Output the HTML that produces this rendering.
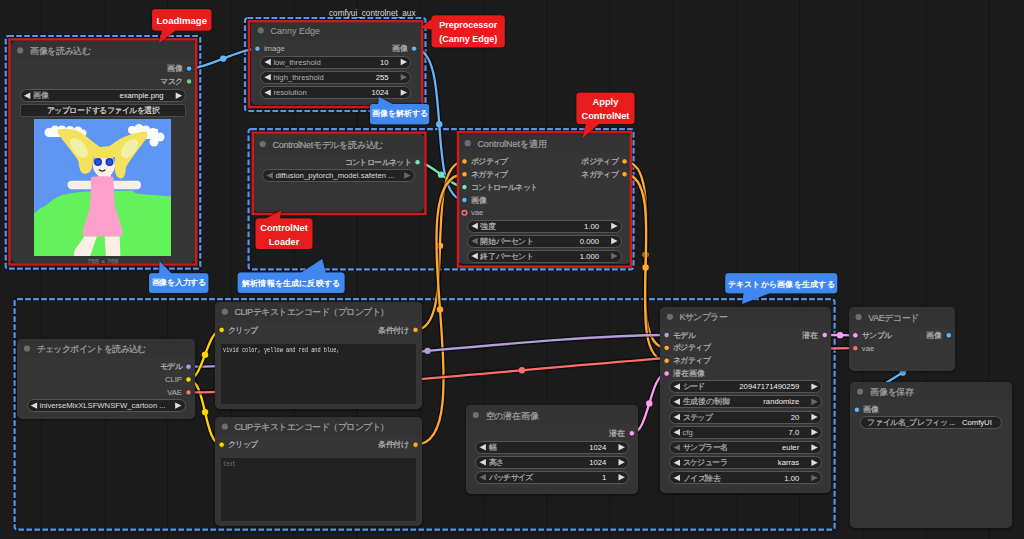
<!DOCTYPE html><html><head><meta charset="utf-8"><style>

*{margin:0;padding:0;box-sizing:border-box}
html,body{width:1024px;height:539px;overflow:hidden;background:#1b1b1b}
body{position:relative;font-family:"Liberation Sans", sans-serif}
.abs{position:absolute}
.t{position:absolute;white-space:nowrap;line-height:20px;height:20px}
.node{position:absolute;background:#353535;border-radius:5px;overflow:hidden;box-shadow:0 1px 3px rgba(0,0,0,0.5)}
.node::before{content:"";position:absolute;left:0;top:0;right:0;height:19.5px;background:#333333}
.wgt{position:absolute;background:#222;border:1px solid #555;border-radius:6.5px}
.btn{position:absolute;background:#222;border:1px solid #4a4a4a;border-radius:2px}
.ta{position:absolute;background:#222}

</style></head><body>
<svg class="abs" style="left:0;top:0" width="1024" height="539"><line x1="-22.0" y1="0" x2="-22.0" y2="539" stroke="#161616" stroke-width="1.2"/><line x1="41.2" y1="0" x2="41.2" y2="539" stroke="#161616" stroke-width="1.2"/><line x1="104.5" y1="0" x2="104.5" y2="539" stroke="#161616" stroke-width="1.2"/><line x1="167.7" y1="0" x2="167.7" y2="539" stroke="#161616" stroke-width="1.2"/><line x1="230.9" y1="0" x2="230.9" y2="539" stroke="#161616" stroke-width="1.2"/><line x1="294.1" y1="0" x2="294.1" y2="539" stroke="#161616" stroke-width="1.2"/><line x1="357.2" y1="0" x2="357.2" y2="539" stroke="#161616" stroke-width="1.2"/><line x1="420.5" y1="0" x2="420.5" y2="539" stroke="#161616" stroke-width="1.2"/><line x1="483.7" y1="0" x2="483.7" y2="539" stroke="#161616" stroke-width="1.2"/><line x1="546.9" y1="0" x2="546.9" y2="539" stroke="#161616" stroke-width="1.2"/><line x1="610.1" y1="0" x2="610.1" y2="539" stroke="#161616" stroke-width="1.2"/><line x1="673.2" y1="0" x2="673.2" y2="539" stroke="#161616" stroke-width="1.2"/><line x1="736.5" y1="0" x2="736.5" y2="539" stroke="#161616" stroke-width="1.2"/><line x1="799.7" y1="0" x2="799.7" y2="539" stroke="#161616" stroke-width="1.2"/><line x1="862.9" y1="0" x2="862.9" y2="539" stroke="#161616" stroke-width="1.2"/><line x1="926.1" y1="0" x2="926.1" y2="539" stroke="#161616" stroke-width="1.2"/><line x1="989.2" y1="0" x2="989.2" y2="539" stroke="#161616" stroke-width="1.2"/><line x1="1052.5" y1="0" x2="1052.5" y2="539" stroke="#161616" stroke-width="1.2"/><rect x="5.70" y="36.00" width="194.60" height="232.70" fill="none" rx="2.5" stroke="rgba(8,16,36,0.8)" stroke-width="3.2"/><rect x="5.70" y="36.00" width="194.60" height="232.70" fill="none" rx="2.5" stroke="#5d93e0" stroke-width="2.2" stroke-dasharray="5.8 2.2"/><rect x="245.00" y="18.00" width="180.50" height="93.00" fill="none" rx="2.5" stroke="rgba(8,16,36,0.8)" stroke-width="3.2"/><rect x="245.00" y="18.00" width="180.50" height="93.00" fill="none" rx="2.5" stroke="#5d93e0" stroke-width="2.2" stroke-dasharray="5.8 2.2"/><rect x="248.60" y="129.10" width="384.90" height="140.20" fill="none" rx="2.5" stroke="rgba(8,16,36,0.8)" stroke-width="3.2"/><rect x="248.60" y="129.10" width="384.90" height="140.20" fill="none" rx="2.5" stroke="#5d93e0" stroke-width="2.2" stroke-dasharray="5.8 2.2"/><rect x="14.60" y="299.20" width="820.00" height="230.40" fill="none" rx="2.5" stroke="rgba(8,16,36,0.8)" stroke-width="3.2"/><rect x="14.60" y="299.20" width="820.00" height="230.40" fill="none" rx="2.5" stroke="#5d93e0" stroke-width="2.2" stroke-dasharray="5.8 2.2"/><path d="M189.05 68.60 C206.87 68.60 239.63 48.60 257.45 48.60" stroke="rgba(0,0,0,0.55)" stroke-width="5" fill="none"/><path d="M189.05 68.60 C206.87 68.60 239.63 48.60 257.45 48.60" stroke="#64B5F6" stroke-width="2.3" fill="none"/><circle cx="223.25" cy="58.60" r="3.2" fill="#64B5F6"/><path d="M414.05 48.60 C453.93 48.60 424.57 199.95 464.45 199.95" stroke="rgba(0,0,0,0.55)" stroke-width="5" fill="none"/><path d="M414.05 48.60 C453.93 48.60 424.57 199.95 464.45 199.95" stroke="#64B5F6" stroke-width="2.3" fill="none"/><circle cx="439.25" cy="124.27" r="3.2" fill="#64B5F6"/><path d="M417.55 162.20 C430.83 162.20 451.17 187.10 464.45 187.10" stroke="rgba(0,0,0,0.55)" stroke-width="5" fill="none"/><path d="M417.55 162.20 C430.83 162.20 451.17 187.10 464.45 187.10" stroke="#6EE7B7" stroke-width="2.3" fill="none"/><circle cx="441.00" cy="174.65" r="3.2" fill="#6EE7B7"/><path d="M415.55 329.90 C459.41 329.90 420.59 161.40 464.45 161.40" stroke="rgba(0,0,0,0.55)" stroke-width="5" fill="none"/><path d="M415.55 329.90 C459.41 329.90 420.59 161.40 464.45 161.40" stroke="#FFA931" stroke-width="2.3" fill="none"/><circle cx="440.00" cy="245.65" r="3.2" fill="#FFA931"/><path d="M415.55 444.70 C484.26 444.70 395.74 174.25 464.45 174.25" stroke="rgba(0,0,0,0.55)" stroke-width="5" fill="none"/><path d="M415.55 444.70 C484.26 444.70 395.74 174.25 464.45 174.25" stroke="#FFA931" stroke-width="2.3" fill="none"/><circle cx="440.00" cy="309.48" r="3.2" fill="#FFA931"/><path d="M624.55 161.40 C672.34 161.40 618.86 347.85 666.65 347.85" stroke="rgba(0,0,0,0.55)" stroke-width="5" fill="none"/><path d="M624.55 161.40 C672.34 161.40 618.86 347.85 666.65 347.85" stroke="#FFA931" stroke-width="2.3" fill="none"/><circle cx="645.60" cy="254.62" r="3.2" fill="#FFA931"/><path d="M624.55 174.25 C672.34 174.25 618.86 360.70 666.65 360.70" stroke="rgba(0,0,0,0.55)" stroke-width="5" fill="none"/><path d="M624.55 174.25 C672.34 174.25 618.86 360.70 666.65 360.70" stroke="#FFA931" stroke-width="2.3" fill="none"/><circle cx="645.60" cy="267.48" r="3.2" fill="#FFA931"/><path d="M188.45 366.70 C308.26 366.70 546.84 335.00 666.65 335.00" stroke="rgba(0,0,0,0.55)" stroke-width="5" fill="none"/><path d="M188.45 366.70 C308.26 366.70 546.84 335.00 666.65 335.00" stroke="#B39DDB" stroke-width="2.3" fill="none"/><circle cx="427.55" cy="350.85" r="3.2" fill="#B39DDB"/><path d="M188.45 379.55 C203.38 379.55 206.72 329.90 221.65 329.90" stroke="rgba(0,0,0,0.55)" stroke-width="5" fill="none"/><path d="M188.45 379.55 C203.38 379.55 206.72 329.90 221.65 329.90" stroke="#FFD500" stroke-width="2.3" fill="none"/><circle cx="205.05" cy="354.73" r="3.2" fill="#FFD500"/><path d="M188.45 379.55 C206.73 379.55 203.37 444.70 221.65 444.70" stroke="rgba(0,0,0,0.55)" stroke-width="5" fill="none"/><path d="M188.45 379.55 C206.73 379.55 203.37 444.70 221.65 444.70" stroke="#FFD500" stroke-width="2.3" fill="none"/><circle cx="205.05" cy="412.12" r="3.2" fill="#FFD500"/><path d="M188.45 392.40 C355.54 392.40 688.26 348.15 855.35 348.15" stroke="rgba(0,0,0,0.55)" stroke-width="5" fill="none"/><path d="M188.45 392.40 C355.54 392.40 688.26 348.15 855.35 348.15" stroke="#FF6E6E" stroke-width="2.3" fill="none"/><circle cx="521.90" cy="370.27" r="3.2" fill="#FF6E6E"/><path d="M631.85 433.30 C649.14 433.30 649.36 373.55 666.65 373.55" stroke="rgba(0,0,0,0.55)" stroke-width="5" fill="none"/><path d="M631.85 433.30 C649.14 433.30 649.36 373.55 666.65 373.55" stroke="#FF9CF9" stroke-width="2.3" fill="none"/><circle cx="649.25" cy="403.42" r="3.2" fill="#FF9CF9"/><path d="M824.75 335.00 C832.40 335.00 847.70 335.30 855.35 335.30" stroke="rgba(0,0,0,0.55)" stroke-width="5" fill="none"/><path d="M824.75 335.00 C832.40 335.00 847.70 335.30 855.35 335.30" stroke="#FF9CF9" stroke-width="2.3" fill="none"/><circle cx="840.05" cy="335.15" r="3.2" fill="#FF9CF9"/><path d="M948.75 335.30 C978.33 335.30 827.27 409.80 856.85 409.80" stroke="rgba(0,0,0,0.55)" stroke-width="5" fill="none"/><path d="M948.75 335.30 C978.33 335.30 827.27 409.80 856.85 409.80" stroke="#64B5F6" stroke-width="2.3" fill="none"/><circle cx="902.80" cy="372.55" r="3.2" fill="#64B5F6"/></svg>
<div class="node" style="left:10.50px;top:40.70px;width:185.00px;height:222.80px"></div>
<div class="t" style="left:29.90px;top:41.00px;font-size:9px;color:#a0a0a0;-webkit-text-stroke:0.2px #a0a0a0;letter-spacing:-0.034em;">画像を読み込む</div>
<div class="t" style="right:841.40px;top:59.20px;font-size:7.7px;color:#b8b8b8;-webkit-text-stroke:0.2px #b8b8b8;">画像</div>
<div class="t" style="right:841.40px;top:72.05px;font-size:7.7px;color:#b8b8b8;-webkit-text-stroke:0.2px #b8b8b8;letter-spacing:-0.080em;">マスク</div>
<div class="wgt" style="left:19.70px;top:89.20px;width:166.40px;height:13px"></div>
<div class="t" style="left:32.90px;top:86.30px;font-size:7.7px;color:#b0b0b0;-webkit-text-stroke:0.2px #b0b0b0;">画像</div>
<div class="t" style="right:860.50px;top:86.30px;font-size:7.7px;color:#eeeeee;">example.png</div>
<div class="btn" style="left:20.10px;top:103.90px;width:165.80px;height:12.8px"></div>
<div class="t" style="left:-47.00px;width:300px;text-align:center;top:100.90px;font-size:7.7px;color:#ddd;-webkit-text-stroke:0.2px #ddd;letter-spacing:-0.069em;">アップロードするファイルを選択</div>
<div class="t" style="left:-47.00px;width:300px;text-align:center;top:251.90px;font-size:7px;color:#888;">768 × 768</div>
<div class="node" style="left:251.00px;top:20.70px;width:169.50px;height:84.80px"></div>
<div class="t" style="left:270.40px;top:21.00px;font-size:9px;color:#a0a0a0;">Canny Edge</div>
<div class="t" style="left:263.90px;top:39.20px;font-size:7.7px;color:#b8b8b8;">image</div>
<div class="t" style="right:616.40px;top:39.20px;font-size:7.7px;color:#b8b8b8;-webkit-text-stroke:0.2px #b8b8b8;">画像</div>
<div class="wgt" style="left:260.20px;top:55.50px;width:150.90px;height:13px"></div>
<div class="t" style="left:273.40px;top:52.60px;font-size:7.7px;color:#b0b0b0;">low_threshold</div>
<div class="t" style="right:635.50px;top:52.60px;font-size:7.7px;color:#eeeeee;">10</div>
<div class="wgt" style="left:260.20px;top:70.80px;width:150.90px;height:13px"></div>
<div class="t" style="left:273.40px;top:67.90px;font-size:7.7px;color:#b0b0b0;">high_threshold</div>
<div class="t" style="right:635.50px;top:67.90px;font-size:7.7px;color:#eeeeee;">255</div>
<div class="wgt" style="left:260.20px;top:86.10px;width:150.90px;height:13px"></div>
<div class="t" style="left:273.40px;top:83.20px;font-size:7.7px;color:#b0b0b0;">resolution</div>
<div class="t" style="right:635.50px;top:83.20px;font-size:7.7px;color:#eeeeee;">1024</div>
<div class="node" style="left:253.00px;top:134.30px;width:171.00px;height:78.00px"></div>
<div class="t" style="left:272.40px;top:134.60px;font-size:9px;color:#a0a0a0;-webkit-text-stroke:0.2px #a0a0a0;letter-spacing:-0.027em;">ControlNetモデルを読み込む</div>
<div class="t" style="right:612.90px;top:152.80px;font-size:7.7px;color:#b8b8b8;-webkit-text-stroke:0.2px #b8b8b8;letter-spacing:-0.080em;">コントロールネット</div>
<div class="wgt" style="left:262.20px;top:169.00px;width:152.40px;height:13px"></div>
<div class="t" style="left:275.40px;top:166.10px;font-size:7.7px;color:#ddd;">diffusion_pytorch_model.safeten ...</div>
<div class="node" style="left:458.00px;top:133.50px;width:173.00px;height:130.50px"></div>
<div class="t" style="left:477.40px;top:133.80px;font-size:9px;color:#a0a0a0;-webkit-text-stroke:0.2px #a0a0a0;letter-spacing:-0.006em;">ControlNetを適用</div>
<div class="t" style="left:470.90px;top:152.00px;font-size:7.7px;color:#b8b8b8;-webkit-text-stroke:0.2px #b8b8b8;letter-spacing:-0.080em;">ポジティブ</div>
<div class="t" style="left:470.90px;top:164.85px;font-size:7.7px;color:#b8b8b8;-webkit-text-stroke:0.2px #b8b8b8;letter-spacing:-0.080em;">ネガティブ</div>
<div class="t" style="left:470.90px;top:177.70px;font-size:7.7px;color:#b8b8b8;-webkit-text-stroke:0.2px #b8b8b8;letter-spacing:-0.080em;">コントロールネット</div>
<div class="t" style="left:470.90px;top:190.55px;font-size:7.7px;color:#b8b8b8;-webkit-text-stroke:0.2px #b8b8b8;">画像</div>
<div class="t" style="left:470.90px;top:203.40px;font-size:7.7px;color:#b8b8b8;">vae</div>
<div class="t" style="right:405.90px;top:152.00px;font-size:7.7px;color:#b8b8b8;-webkit-text-stroke:0.2px #b8b8b8;letter-spacing:-0.080em;">ポジティブ</div>
<div class="t" style="right:405.90px;top:164.85px;font-size:7.7px;color:#b8b8b8;-webkit-text-stroke:0.2px #b8b8b8;letter-spacing:-0.080em;">ネガティブ</div>
<div class="wgt" style="left:467.20px;top:219.50px;width:154.40px;height:13px"></div>
<div class="t" style="left:480.40px;top:216.60px;font-size:7.7px;color:#b0b0b0;-webkit-text-stroke:0.2px #b0b0b0;">強度</div>
<div class="t" style="right:425.00px;top:216.60px;font-size:7.7px;color:#eeeeee;">1.00</div>
<div class="wgt" style="left:467.20px;top:234.50px;width:154.40px;height:13px"></div>
<div class="t" style="left:480.40px;top:231.60px;font-size:7.7px;color:#b0b0b0;-webkit-text-stroke:0.2px #b0b0b0;letter-spacing:-0.057em;">開始パーセント</div>
<div class="t" style="right:425.00px;top:231.60px;font-size:7.7px;color:#eeeeee;">0.000</div>
<div class="wgt" style="left:467.20px;top:249.50px;width:154.40px;height:13px"></div>
<div class="t" style="left:480.40px;top:246.60px;font-size:7.7px;color:#b0b0b0;-webkit-text-stroke:0.2px #b0b0b0;letter-spacing:-0.057em;">終了パーセント</div>
<div class="t" style="right:425.00px;top:246.60px;font-size:7.7px;color:#eeeeee;">1.000</div>
<div class="node" style="left:215.20px;top:302.00px;width:206.80px;height:107.40px"></div>
<div class="t" style="left:234.60px;top:302.30px;font-size:9px;color:#a0a0a0;-webkit-text-stroke:0.2px #a0a0a0;letter-spacing:-0.056em;">CLIPテキストエンコード（プロンプト）</div>
<div class="t" style="left:228.10px;top:320.50px;font-size:7.7px;color:#b8b8b8;-webkit-text-stroke:0.2px #b8b8b8;letter-spacing:-0.080em;">クリップ</div>
<div class="t" style="right:614.90px;top:320.50px;font-size:7.7px;color:#b8b8b8;-webkit-text-stroke:0.2px #b8b8b8;letter-spacing:-0.020em;">条件付け</div>
<div class="ta" style="left:221px;top:344px;width:194.5px;height:60px"></div>
<div class="t" style="left:222.50px;top:339.60px;font-size:7px;color:#ddd;font-family:'Liberation Mono', monospace;transform:scaleX(0.75);transform-origin:0 50%;">vivid color, yellow and red and blue,</div>
<div class="node" style="left:215.20px;top:416.80px;width:206.80px;height:109.60px"></div>
<div class="t" style="left:234.60px;top:417.10px;font-size:9px;color:#a0a0a0;-webkit-text-stroke:0.2px #a0a0a0;letter-spacing:-0.056em;">CLIPテキストエンコード（プロンプト）</div>
<div class="t" style="left:228.10px;top:435.30px;font-size:7.7px;color:#b8b8b8;-webkit-text-stroke:0.2px #b8b8b8;letter-spacing:-0.080em;">クリップ</div>
<div class="t" style="right:614.90px;top:435.30px;font-size:7.7px;color:#b8b8b8;-webkit-text-stroke:0.2px #b8b8b8;letter-spacing:-0.020em;">条件付け</div>
<div class="ta" style="left:221px;top:458px;width:194.5px;height:63px"></div>
<div class="t" style="left:222.50px;top:453.60px;font-size:7px;color:#777;font-family:'Liberation Mono', monospace;transform:scaleX(0.75);transform-origin:0 50%;">text</div>
<div class="node" style="left:17.30px;top:338.80px;width:177.60px;height:80.70px"></div>
<div class="t" style="left:36.70px;top:339.10px;font-size:9px;color:#a0a0a0;-webkit-text-stroke:0.2px #a0a0a0;letter-spacing:-0.068em;">チェックポイントを読み込む</div>
<div class="t" style="right:842.00px;top:357.30px;font-size:7.7px;color:#b8b8b8;-webkit-text-stroke:0.2px #b8b8b8;letter-spacing:-0.080em;">モデル</div>
<div class="t" style="right:842.00px;top:370.15px;font-size:7.7px;color:#b8b8b8;">CLIP</div>
<div class="t" style="right:842.00px;top:383.00px;font-size:7.7px;color:#b8b8b8;">VAE</div>
<div class="wgt" style="left:26.50px;top:399.10px;width:159.00px;height:13px"></div>
<div class="t" style="left:39.70px;top:396.20px;font-size:7.7px;color:#ddd;">iniverseMixXLSFWNSFW_cartoon ...</div>
<div class="node" style="left:466.10px;top:405.40px;width:172.20px;height:88.20px"></div>
<div class="t" style="left:485.50px;top:405.70px;font-size:9px;color:#a0a0a0;-webkit-text-stroke:0.2px #a0a0a0;letter-spacing:-0.013em;">空の潜在画像</div>
<div class="t" style="right:398.60px;top:423.90px;font-size:7.7px;color:#b8b8b8;-webkit-text-stroke:0.2px #b8b8b8;">潜在</div>
<div class="wgt" style="left:475.30px;top:440.70px;width:153.60px;height:13px"></div>
<div class="t" style="left:488.50px;top:437.80px;font-size:7.7px;color:#b0b0b0;-webkit-text-stroke:0.2px #b0b0b0;">幅</div>
<div class="t" style="right:417.70px;top:437.80px;font-size:7.7px;color:#eeeeee;">1024</div>
<div class="wgt" style="left:475.30px;top:455.80px;width:153.60px;height:13px"></div>
<div class="t" style="left:488.50px;top:452.90px;font-size:7.7px;color:#b0b0b0;-webkit-text-stroke:0.2px #b0b0b0;letter-spacing:-0.040em;">高さ</div>
<div class="t" style="right:417.70px;top:452.90px;font-size:7.7px;color:#eeeeee;">1024</div>
<div class="wgt" style="left:475.30px;top:470.70px;width:153.60px;height:13px"></div>
<div class="t" style="left:488.50px;top:467.80px;font-size:7.7px;color:#b0b0b0;-webkit-text-stroke:0.2px #b0b0b0;letter-spacing:-0.080em;">バッチサイズ</div>
<div class="t" style="right:417.70px;top:467.80px;font-size:7.7px;color:#eeeeee;">1</div>
<div class="node" style="left:660.20px;top:307.10px;width:171.00px;height:186.10px"></div>
<div class="t" style="left:679.60px;top:307.40px;font-size:9px;color:#a0a0a0;-webkit-text-stroke:0.2px #a0a0a0;letter-spacing:-0.067em;">Kサンプラー</div>
<div class="t" style="left:673.10px;top:325.60px;font-size:7.7px;color:#b8b8b8;-webkit-text-stroke:0.2px #b8b8b8;letter-spacing:-0.080em;">モデル</div>
<div class="t" style="left:673.10px;top:338.45px;font-size:7.7px;color:#b8b8b8;-webkit-text-stroke:0.2px #b8b8b8;letter-spacing:-0.080em;">ポジティブ</div>
<div class="t" style="left:673.10px;top:351.30px;font-size:7.7px;color:#b8b8b8;-webkit-text-stroke:0.2px #b8b8b8;letter-spacing:-0.080em;">ネガティブ</div>
<div class="t" style="left:673.10px;top:364.15px;font-size:7.7px;color:#b8b8b8;-webkit-text-stroke:0.2px #b8b8b8;">潜在画像</div>
<div class="t" style="right:205.70px;top:325.60px;font-size:7.7px;color:#b8b8b8;-webkit-text-stroke:0.2px #b8b8b8;">潜在</div>
<div class="wgt" style="left:669.40px;top:380.10px;width:152.40px;height:13px"></div>
<div class="t" style="left:682.60px;top:377.20px;font-size:7.7px;color:#b0b0b0;-webkit-text-stroke:0.2px #b0b0b0;letter-spacing:-0.080em;">シード</div>
<div class="t" style="right:224.80px;top:377.20px;font-size:7.7px;color:#eeeeee;">20947171490259</div>
<div class="wgt" style="left:669.40px;top:395.32px;width:152.40px;height:13px"></div>
<div class="t" style="left:682.60px;top:392.42px;font-size:7.7px;color:#b0b0b0;-webkit-text-stroke:0.2px #b0b0b0;letter-spacing:-0.013em;">生成後の制御</div>
<div class="t" style="right:224.80px;top:392.42px;font-size:7.7px;color:#eeeeee;">randomize</div>
<div class="wgt" style="left:669.40px;top:410.54px;width:152.40px;height:13px"></div>
<div class="t" style="left:682.60px;top:407.64px;font-size:7.7px;color:#b0b0b0;-webkit-text-stroke:0.2px #b0b0b0;letter-spacing:-0.080em;">ステップ</div>
<div class="t" style="right:224.80px;top:407.64px;font-size:7.7px;color:#eeeeee;">20</div>
<div class="wgt" style="left:669.40px;top:425.76px;width:152.40px;height:13px"></div>
<div class="t" style="left:682.60px;top:422.86px;font-size:7.7px;color:#b0b0b0;">cfg</div>
<div class="t" style="right:224.80px;top:422.86px;font-size:7.7px;color:#eeeeee;">7.0</div>
<div class="wgt" style="left:669.40px;top:440.98px;width:152.40px;height:13px"></div>
<div class="t" style="left:682.60px;top:438.08px;font-size:7.7px;color:#b0b0b0;-webkit-text-stroke:0.2px #b0b0b0;letter-spacing:-0.067em;">サンプラー名</div>
<div class="t" style="right:224.80px;top:438.08px;font-size:7.7px;color:#eeeeee;">euler</div>
<div class="wgt" style="left:669.40px;top:456.20px;width:152.40px;height:13px"></div>
<div class="t" style="left:682.60px;top:453.30px;font-size:7.7px;color:#b0b0b0;-webkit-text-stroke:0.2px #b0b0b0;letter-spacing:-0.080em;">スケジューラ</div>
<div class="t" style="right:224.80px;top:453.30px;font-size:7.7px;color:#eeeeee;">karras</div>
<div class="wgt" style="left:669.40px;top:471.42px;width:152.40px;height:13px"></div>
<div class="t" style="left:682.60px;top:468.52px;font-size:7.7px;color:#b0b0b0;-webkit-text-stroke:0.2px #b0b0b0;letter-spacing:-0.048em;">ノイズ除去</div>
<div class="t" style="right:224.80px;top:468.52px;font-size:7.7px;color:#eeeeee;">1.00</div>
<div class="node" style="left:848.90px;top:307.40px;width:106.30px;height:63.40px"></div>
<div class="t" style="left:868.30px;top:307.70px;font-size:9px;color:#a0a0a0;-webkit-text-stroke:0.2px #a0a0a0;letter-spacing:-0.046em;">VAEデコード</div>
<div class="t" style="left:861.80px;top:325.90px;font-size:7.7px;color:#b8b8b8;-webkit-text-stroke:0.2px #b8b8b8;letter-spacing:-0.080em;">サンプル</div>
<div class="t" style="left:861.80px;top:338.75px;font-size:7.7px;color:#b8b8b8;">vae</div>
<div class="t" style="right:81.70px;top:325.90px;font-size:7.7px;color:#b8b8b8;-webkit-text-stroke:0.2px #b8b8b8;">画像</div>
<div class="node" style="left:850.40px;top:381.90px;width:161.30px;height:146.20px"></div>
<div class="t" style="left:869.80px;top:382.20px;font-size:9px;color:#a0a0a0;-webkit-text-stroke:0.2px #a0a0a0;letter-spacing:-0.016em;">画像を保存</div>
<div class="t" style="left:863.30px;top:400.40px;font-size:7.7px;color:#b8b8b8;-webkit-text-stroke:0.2px #b8b8b8;">画像</div>
<div class="wgt" style="left:859.60px;top:416.30px;width:142.70px;height:13px"></div>
<div class="t" style="left:867.40px;top:413.40px;font-size:7.7px;color:#b0b0b0;-webkit-text-stroke:0.2px #b0b0b0;letter-spacing:-0.048em;">ファイル名_プレフィッ ...</div>
<div class="t" style="right:32.20px;top:413.40px;font-size:7.7px;color:#eeeeee;">ComfyUI</div>
<svg class="abs" style="left:34.1px;top:119px" width="137.4" height="137.4" viewBox="0 0 137.4 137.4">
<rect width="137.4" height="137.4" fill="#5f95f3"/>
<path d="M0 94.6 C4 91 8 88 11.4 86.7 C17 82 22 78 28.6 76 C38 73.5 46 72.5 55.7 72.4 C72 72 86 71.5 98.6 71.7 C100.5 73 101.5 74 102.9 74.6 C115 76 126 76.5 137.4 77.4 L137.4 137.4 L0 137.4 Z" fill="#64f25c"/>
<g fill="#fbfbfb"><circle cx="15" cy="13.5" r="4.5"/><circle cx="21" cy="11" r="4.5"/><circle cx="28" cy="10.5" r="4"/><circle cx="36" cy="11.5" r="4.5"/><circle cx="44" cy="12" r="4.5"/><circle cx="49" cy="14" r="3.5"/><rect x="14" y="11" width="36" height="7"/>
<circle cx="98" cy="11" r="4"/><circle cx="105" cy="9.5" r="4.5"/><circle cx="112" cy="11" r="4.5"/><circle cx="119" cy="14" r="5"/><circle cx="126" cy="18" r="4.5"/><circle cx="120" cy="23" r="4.5"/><rect x="98" y="10" width="26" height="10"/></g>
<path d="M33.6 65.6 C33.6 62.5 35.5 61.7 38 61.7 L103 61.7 C105.5 61.7 107 63 107 66 C107 69 105.5 70.3 103 70.3 L38 70.3 C35.5 70.3 33.6 69 33.6 65.6 Z" fill="#f9efe4"/>
<ellipse cx="70" cy="46.5" rx="11" ry="11.5" fill="#f9efe4"/>
<rect x="64" y="54" width="13" height="8" fill="#f9efe4"/>
<path d="M23.6 10.5 C31 9 40 10 46 13 C54 18 60 24 66 28 C70 27.5 73 27.5 76 27 C84 20 95 14 111.9 12.5 C114 14 114 17 112 20 C104 31 96 41 92 48 C91.5 53 91 58 88 59.3 C84 60 81.5 56 81 52 C81 45 81 41 81 38 C75 39.5 65 39.5 59.5 38.5 C59 44 58.5 47 57 51 C55 55 50 56 47.5 53.5 C45 50 45 46 44.5 42 C38 32 28 21 23.6 13.5 Z" fill="#f5e25c"/>
<ellipse cx="45" cy="29" rx="11.5" ry="6.5" transform="rotate(52 45 29)" fill="#f4efa8"/>
<ellipse cx="95.5" cy="29.5" rx="11" ry="6.5" transform="rotate(-50 95.5 29.5)" fill="#f4efa8"/>
<circle cx="64" cy="43.1" r="4" fill="#1638b8"/><circle cx="75.5" cy="43.1" r="4" fill="#1638b8"/>
<circle cx="64" cy="43.1" r="2.6" fill="#2452e0"/><circle cx="75.5" cy="43.1" r="2.6" fill="#2452e0"/>
<path d="M65 50.5 Q68 53.5 71.5 50.8" stroke="#2a1a10" stroke-width="1.1" fill="none"/>
<path d="M57 58 C62 57 75 57 79.3 58 C80 72 80 85 82 90 C85 100 88 108 88.6 113 C88.6 116.5 86.5 117.4 84 117.4 L52 117.4 C49.5 117.4 48.5 116 48.6 113 C50 105 55 95 56 85 C57 75 57 65 57 58 Z" fill="#fea0cc"/>
<path d="M50 117.4 L62.9 117.4 L56 137.4 L40 137.4 C39.5 134 40.5 131 42 129 C45 125 48 121 50 117.4 Z M70.7 117.4 L85.7 117.4 L86.4 137.4 L72 137.4 Z" fill="#f9efe4"/>
</svg>
<svg class="abs" style="left:0;top:0" width="1024" height="539"><circle cx="20.20" cy="50.40" r="3.1" fill="#6e6e6e"/><circle cx="189.05" cy="68.60" r="2.7" fill="#64B5F6" stroke="#1a1a1a" stroke-width="0.7"/><circle cx="189.05" cy="81.45" r="2.7" fill="#81C784" stroke="#1a1a1a" stroke-width="0.7"/><polygon points="23.90,95.70 30.30,92.50 30.30,98.90" fill="#ddd"/><polygon points="182.10,95.70 175.70,92.50 175.70,98.90" fill="#ddd"/><circle cx="260.70" cy="30.40" r="3.1" fill="#6e6e6e"/><circle cx="257.45" cy="48.60" r="2.7" fill="#64B5F6" stroke="#1a1a1a" stroke-width="0.7"/><circle cx="414.05" cy="48.60" r="2.7" fill="#64B5F6" stroke="#1a1a1a" stroke-width="0.7"/><polygon points="264.40,62.00 270.80,58.80 270.80,65.20" fill="#ddd"/><polygon points="407.10,62.00 400.70,58.80 400.70,65.20" fill="#ddd"/><polygon points="264.40,77.30 270.80,74.10 270.80,80.50" fill="#ddd"/><polygon points="407.10,77.30 400.70,74.10 400.70,80.50" fill="#6a6a6a"/><polygon points="264.40,92.60 270.80,89.40 270.80,95.80" fill="#ddd"/><polygon points="407.10,92.60 400.70,89.40 400.70,95.80" fill="#ddd"/><circle cx="262.70" cy="144.00" r="3.1" fill="#6e6e6e"/><circle cx="417.55" cy="162.20" r="2.7" fill="#6EE7B7" stroke="#1a1a1a" stroke-width="0.7"/><polygon points="266.40,175.50 272.80,172.30 272.80,178.70" fill="#6a6a6a"/><polygon points="410.60,175.50 404.20,172.30 404.20,178.70" fill="#6a6a6a"/><circle cx="467.70" cy="143.20" r="3.1" fill="#6e6e6e"/><circle cx="464.45" cy="161.40" r="2.7" fill="#FFA931" stroke="#1a1a1a" stroke-width="0.7"/><circle cx="464.45" cy="174.25" r="2.7" fill="#FFA931" stroke="#1a1a1a" stroke-width="0.7"/><circle cx="464.45" cy="187.10" r="2.7" fill="#6EE7B7" stroke="#1a1a1a" stroke-width="0.7"/><circle cx="464.45" cy="199.95" r="2.7" fill="#64B5F6" stroke="#1a1a1a" stroke-width="0.7"/><circle cx="464.45" cy="212.80" r="2.3" fill="none" stroke="#FF6E6E" stroke-width="1.4"/><circle cx="624.55" cy="161.40" r="2.7" fill="#FFA931" stroke="#1a1a1a" stroke-width="0.7"/><circle cx="624.55" cy="174.25" r="2.7" fill="#FFA931" stroke="#1a1a1a" stroke-width="0.7"/><polygon points="471.40,226.00 477.80,222.80 477.80,229.20" fill="#ddd"/><polygon points="617.60,226.00 611.20,222.80 611.20,229.20" fill="#ddd"/><polygon points="471.40,241.00 477.80,237.80 477.80,244.20" fill="#6a6a6a"/><polygon points="617.60,241.00 611.20,237.80 611.20,244.20" fill="#ddd"/><polygon points="471.40,256.00 477.80,252.80 477.80,259.20" fill="#ddd"/><polygon points="617.60,256.00 611.20,252.80 611.20,259.20" fill="#6a6a6a"/><circle cx="224.90" cy="311.70" r="3.1" fill="#6e6e6e"/><circle cx="221.65" cy="329.90" r="2.7" fill="#FFD500" stroke="#1a1a1a" stroke-width="0.7"/><circle cx="415.55" cy="329.90" r="2.7" fill="#FFA931" stroke="#1a1a1a" stroke-width="0.7"/><circle cx="224.90" cy="426.50" r="3.1" fill="#6e6e6e"/><circle cx="221.65" cy="444.70" r="2.7" fill="#FFD500" stroke="#1a1a1a" stroke-width="0.7"/><circle cx="415.55" cy="444.70" r="2.7" fill="#FFA931" stroke="#1a1a1a" stroke-width="0.7"/><circle cx="27.00" cy="348.50" r="3.1" fill="#6e6e6e"/><circle cx="188.45" cy="366.70" r="2.7" fill="#B39DDB" stroke="#1a1a1a" stroke-width="0.7"/><circle cx="188.45" cy="379.55" r="2.7" fill="#FFD500" stroke="#1a1a1a" stroke-width="0.7"/><circle cx="188.45" cy="392.40" r="2.7" fill="#FF6E6E" stroke="#1a1a1a" stroke-width="0.7"/><polygon points="30.70,405.60 37.10,402.40 37.10,408.80" fill="#ddd"/><polygon points="181.50,405.60 175.10,402.40 175.10,408.80" fill="#ddd"/><circle cx="475.80" cy="415.10" r="3.1" fill="#6e6e6e"/><circle cx="631.85" cy="433.30" r="2.7" fill="#FF9CF9" stroke="#1a1a1a" stroke-width="0.7"/><polygon points="479.50,447.20 485.90,444.00 485.90,450.40" fill="#ddd"/><polygon points="624.90,447.20 618.50,444.00 618.50,450.40" fill="#ddd"/><polygon points="479.50,462.30 485.90,459.10 485.90,465.50" fill="#ddd"/><polygon points="624.90,462.30 618.50,459.10 618.50,465.50" fill="#ddd"/><polygon points="479.50,477.20 485.90,474.00 485.90,480.40" fill="#6a6a6a"/><polygon points="624.90,477.20 618.50,474.00 618.50,480.40" fill="#ddd"/><circle cx="669.90" cy="316.80" r="3.1" fill="#6e6e6e"/><circle cx="666.65" cy="335.00" r="2.7" fill="#B39DDB" stroke="#1a1a1a" stroke-width="0.7"/><circle cx="666.65" cy="347.85" r="2.7" fill="#FFA931" stroke="#1a1a1a" stroke-width="0.7"/><circle cx="666.65" cy="360.70" r="2.7" fill="#FFA931" stroke="#1a1a1a" stroke-width="0.7"/><circle cx="666.65" cy="373.55" r="2.7" fill="#FF9CF9" stroke="#1a1a1a" stroke-width="0.7"/><circle cx="824.75" cy="335.00" r="2.7" fill="#FF9CF9" stroke="#1a1a1a" stroke-width="0.7"/><polygon points="673.60,386.60 680.00,383.40 680.00,389.80" fill="#ddd"/><polygon points="817.80,386.60 811.40,383.40 811.40,389.80" fill="#ddd"/><polygon points="673.60,401.82 680.00,398.62 680.00,405.02" fill="#ddd"/><polygon points="817.80,401.82 811.40,398.62 811.40,405.02" fill="#6a6a6a"/><polygon points="673.60,417.04 680.00,413.84 680.00,420.24" fill="#ddd"/><polygon points="817.80,417.04 811.40,413.84 811.40,420.24" fill="#ddd"/><polygon points="673.60,432.26 680.00,429.06 680.00,435.46" fill="#ddd"/><polygon points="817.80,432.26 811.40,429.06 811.40,435.46" fill="#ddd"/><polygon points="673.60,447.48 680.00,444.28 680.00,450.68" fill="#6a6a6a"/><polygon points="817.80,447.48 811.40,444.28 811.40,450.68" fill="#ddd"/><polygon points="673.60,462.70 680.00,459.50 680.00,465.90" fill="#ddd"/><polygon points="817.80,462.70 811.40,459.50 811.40,465.90" fill="#ddd"/><polygon points="673.60,477.92 680.00,474.72 680.00,481.12" fill="#ddd"/><polygon points="817.80,477.92 811.40,474.72 811.40,481.12" fill="#6a6a6a"/><circle cx="858.60" cy="317.10" r="3.1" fill="#6e6e6e"/><circle cx="855.35" cy="335.30" r="2.7" fill="#FF9CF9" stroke="#1a1a1a" stroke-width="0.7"/><circle cx="855.35" cy="348.15" r="2.7" fill="#FF6E6E" stroke="#1a1a1a" stroke-width="0.7"/><circle cx="948.75" cy="335.30" r="2.7" fill="#64B5F6" stroke="#1a1a1a" stroke-width="0.7"/><circle cx="860.10" cy="391.60" r="3.1" fill="#6e6e6e"/><circle cx="856.85" cy="409.80" r="2.7" fill="#64B5F6" stroke="#1a1a1a" stroke-width="0.7"/><rect x="9.50" y="39.40" width="186.70" height="225.10" fill="none" stroke="#d01a1a" stroke-width="2.4"/><rect x="249.00" y="21.20" width="173.20" height="85.80" fill="none" stroke="#d01a1a" stroke-width="2.4"/><rect x="252.80" y="132.70" width="172.60" height="81.20" fill="none" stroke="#d01a1a" stroke-width="2.4"/><rect x="458.00" y="132.20" width="172.90" height="134.40" fill="none" stroke="#d01a1a" stroke-width="2.4"/><defs><filter id="sh" x="-20%" y="-20%" width="140%" height="140%"><feDropShadow dx="0" dy="0" stdDeviation="0.8" flood-color="#000" flood-opacity="0.9"/></filter></defs><g filter="url(#sh)"><rect x="152.10" y="9.30" width="59.30" height="21.30" rx="3" fill="#e81e1e"/><polygon points="162.30,30.00 176.20,30.00 159.00,43.10" fill="#e81e1e"/></g><g filter="url(#sh)"><rect x="431.70" y="15.60" width="73.00" height="31.70" rx="3" fill="#e81e1e"/><polygon points="432.00,18.90 432.00,29.50 420.60,27.70" fill="#e81e1e"/></g><g filter="url(#sh)"><rect x="576.50" y="92.70" width="57.90" height="31.20" rx="3" fill="#e81e1e"/><polygon points="586.20,123.00 600.00,123.00 582.30,138.30" fill="#e81e1e"/></g><g filter="url(#sh)"><rect x="255.60" y="218.40" width="56.80" height="30.60" rx="3" fill="#e81e1e"/><polygon points="265.00,219.00 279.50,219.00 281.40,210.60" fill="#e81e1e"/></g><g filter="url(#sh)"><rect x="149.00" y="273.20" width="59.30" height="19.80" rx="3" fill="#3f88f0"/><polygon points="159.00,274.00 172.00,274.00 159.80,261.80" fill="#3f88f0"/></g><g filter="url(#sh)"><rect x="370.00" y="104.00" width="59.10" height="20.20" rx="3" fill="#3f88f0"/><polygon points="378.10,105.00 394.00,105.00 379.00,97.00" fill="#3f88f0"/></g><g filter="url(#sh)"><rect x="237.70" y="272.60" width="106.80" height="20.40" rx="3" fill="#3f88f0"/><polygon points="300.00,273.50 325.80,273.50 322.20,259.00" fill="#3f88f0"/></g><g filter="url(#sh)"><rect x="725.30" y="273.30" width="111.90" height="20.00" rx="3" fill="#3f88f0"/><polygon points="743.75,292.50 771.00,292.50 742.20,303.90" fill="#3f88f0"/></g></svg>
<div class="t" style="left:31.75px;width:300px;text-align:center;top:10.85px;font-size:9.6px;color:#fff;font-weight:bold;">LoadImage</div>
<div class="t" style="left:318.20px;width:300px;text-align:center;top:15.35px;font-size:9.0px;color:#fff;font-weight:bold;">Preprocessor</div>
<div class="t" style="left:318.20px;width:300px;text-align:center;top:29.35px;font-size:9.0px;color:#fff;font-weight:bold;">(Canny Edge)</div>
<div class="t" style="left:455.45px;width:300px;text-align:center;top:92.20px;font-size:9.3px;color:#fff;font-weight:bold;">Apply</div>
<div class="t" style="left:455.45px;width:300px;text-align:center;top:106.20px;font-size:9.3px;color:#fff;font-weight:bold;">ControlNet</div>
<div class="t" style="left:134.00px;width:300px;text-align:center;top:217.60px;font-size:9.2px;color:#fff;font-weight:bold;">ControlNet</div>
<div class="t" style="left:134.00px;width:300px;text-align:center;top:231.60px;font-size:9.2px;color:#fff;font-weight:bold;">Loader</div>
<div class="t" style="left:28.65px;width:300px;text-align:center;top:273.40px;font-size:7.5px;color:#fff;font-weight:bold;letter-spacing:-0.25px;">画像を入力する</div>
<div class="t" style="left:249.55px;width:300px;text-align:center;top:104.40px;font-size:7.5px;color:#fff;font-weight:bold;">画像を解析する</div>
<div class="t" style="left:141.10px;width:300px;text-align:center;top:273.10px;font-size:8.3px;color:#fff;font-weight:bold;letter-spacing:0.15px;">解析情報を生成に反映する</div>
<div class="t" style="left:631.25px;width:300px;text-align:center;top:273.60px;font-size:8.3px;color:#fff;font-weight:bold;letter-spacing:0.25px;">テキストから画像を生成する</div>
<div class="t" style="left:329.00px;top:4.20px;font-size:8.2px;color:#d8dcd8;">comfyui_controlnet_aux</div>
</body></html>
